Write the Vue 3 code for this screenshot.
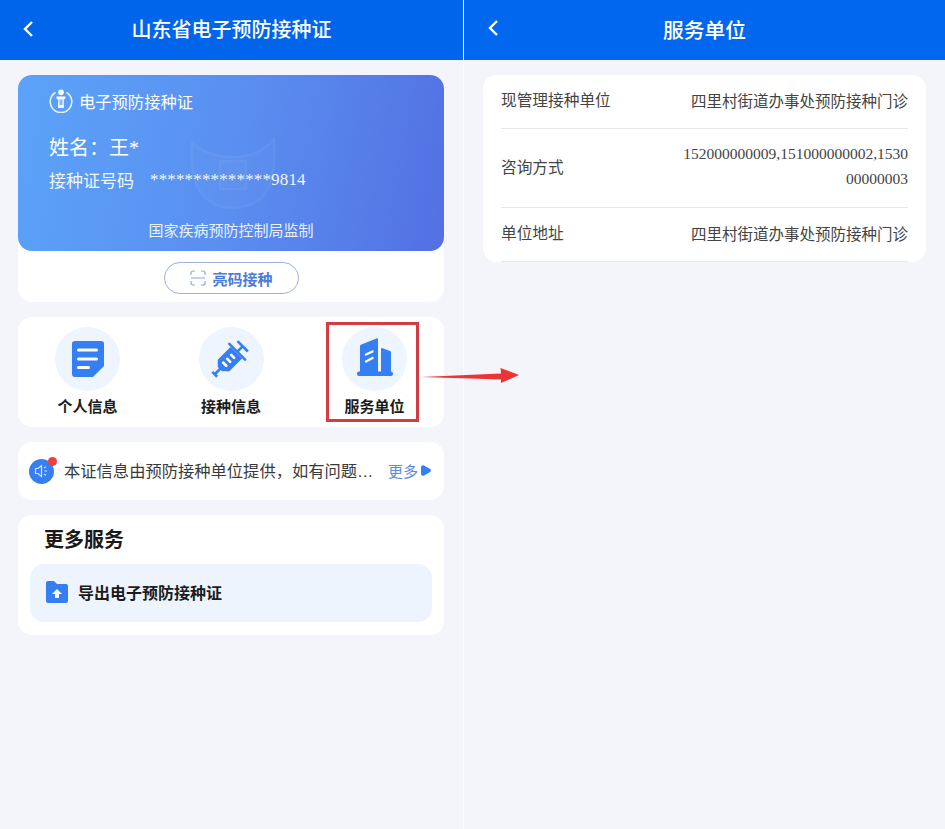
<template>
  <div class="screen">
    <!-- left phone -->
    <section class="panel panel-left">
      <header class="topbar">
        <svg class="back" viewBox="0 0 14 22" width="14" height="22"><path d="M11 4 4 11l7 7" /></svg>
        <h1>山东省电子预防接种证</h1>
      </header>

      <div class="content">
        <div class="white-card cert-wrap">
          <div class="cert">
            <svg class="watermark" viewBox="0 0 90 72" width="90" height="72">
              <path d="M4 6c12 10 26 14 41 14S74 16 86 2c2 30-2 50-14 60-8 6-17 9-27 9s-19-3-26-9C6 52 2 32 4 6Z" />
              <path d="M32 24h26v28H32z" />
            </svg>
            <div class="cert-title">
              <svg viewBox="0 0 24 24" width="24" height="24" class="cert-logo">
                <path class="ring" d="M6.5 3.5a10.8 10.8 0 1 0 11 0" />
                <circle cx="12" cy="3.2" r="2.8" />
                <path d="M7.6 7.4h8.8v2.4l-1.6.6V19H9.2v-8.600l-1.600-.6Z" />
                <rect class="cut" x="10.4" y="10.4" width="3.2" height="5.6" />
              </svg>
              <span>电子预防接种证</span>
            </div>
            <div class="cert-name">姓名：王<span class="serif">*</span></div>
            <div class="cert-no">
              <span>接种证号码</span>
              <span class="serif cert-digits">**************9814</span>
            </div>
            <div class="cert-foot">国家疾病预防控制局监制</div>
          </div>
          <div class="show-code">
            <button class="code-btn">
              <svg viewBox="0 0 16 16" width="16" height="16">
                <path d="M1 5V3a2 2 0 0 1 2-2h2M11 1h2a2 2 0 0 1 2 2v2M15 11v2a2 2 0 0 1-2 2h-2M5 15H3a2 2 0 0 1-2-2v-2M1 8h14" />
              </svg>
              亮码接种
            </button>
          </div>
        </div>

        <div class="white-card nav-card">
          <div v-for="item in navItems" :key="item.label" class="nav-item">
            <div class="nav-circle">
              <svg v-if="item.icon === 'doc'" viewBox="0 0 32 36" width="32" height="36">
                <path class="fill" d="M3 0h26a3 3 0 0 1 3 3v22L21 36H3a3 3 0 0 1-3-3V3a3 3 0 0 1 3-3Z" />
                <path class="white-line" d="M6.500 9h18M6.500 18h18M6.500 26.500h10" />
              </svg>
              <svg v-else-if="item.icon === 'syringe'" class="syringe" viewBox="0 0 40 40" width="40" height="40">
                <g transform="translate(-1.500 0.500) rotate(45 20 20) translate(2.800 3.500) scale(0.86)">
                  <path class="fill" d="M11.5-4h17v3h-17z" />
                  <path class="fill" d="M18.500-2h3v8h-3z" />
                  <path class="fill" d="M7 5h26a1.500 1.500 0 0 1 0 3H7a1.500 1.500 0 0 1 0-3Z" />
                  <path class="fill" d="M10.500 8h19v21l-6 6h-7l-6-6Z" />
                  <path class="fill" d="M18.500 34h3v9h-3z" />
                  <path class="fill" d="M16 42h8v3h-8z" />
                  <path class="white-dash" d="M17.500 14h5M17.500 20.500h5M17.500 27h5" />
                </g>
              </svg>
              <svg v-else class="building" viewBox="0 0 36 38" width="36" height="38">
                <path class="fill" d="M3 8c0-.6.3-1 .9-1.200L20 .2c.6-.2 1 .1 1 .8V35H3Z" />
                <path class="fill" d="M24 10.800c0-.6.4-.9 1-.8l8 3c.6.2 1 .7 1 1.300V35H24Z" />
                <rect class="fill" x="0" y="33.500" width="36" height="4.500" rx="2" />
                <path class="white-line thin" d="M9 16.500 15.500 13.500M9 23.500 15.500 20" />
              </svg>
            </div>
            <div class="nav-label">{{ item.label }}</div>
          </div>
        </div>

        <div class="white-card notice">
          <span class="horn">
            <svg viewBox="0 0 24 24" width="24" height="24">
              <path d="M6.500 9.500H9l3.500-3v11L9 14.500H6.500ZM15 9l2-1.200M15.500 12H18M15 15l2 1.200" />
            </svg>
            <i class="dot"></i>
          </span>
          <span class="notice-text">本证信息由预防接种单位提供，如有问题<span class="dots">…</span></span>
          <span class="more">更多<svg viewBox="0 0 10 11" width="10" height="11"><path d="M0 2.200a2 2 0 0 1 3-1.700l5.800 3.200a2 2 0 0 1 0 3.600L3 10.500a2 2 0 0 1-3-1.700Z" /></svg></span>
        </div>

        <div class="white-card services">
          <h2>更多服务</h2>
          <div class="export-row">
            <svg viewBox="0 0 22 22" width="22" height="22">
              <path class="fill" d="M2 0h6l3 3h9a2 2 0 0 1 2 2v15a2 2 0 0 1-2 2H2a2 2 0 0 1-2-2V2a2 2 0 0 1 2-2Z" />
              <path fill="#fff" d="M11 8 16 13h-3v4H9v-4H6Z" />
            </svg>
            <span>导出电子预防接种证</span>
          </div>
        </div>
      </div>
    </section>

    <!-- right phone -->
    <section class="panel panel-right">
      <header class="topbar">
        <svg class="back" viewBox="0 0 14 22" width="14" height="22"><path d="M11 4 4 11l7 7" /></svg>
        <h1>服务单位</h1>
      </header>
      <div class="detail-card">
        <div class="detail-row">
          <span class="detail-key">现管理接种单位</span>
          <span class="detail-val">四里村街道办事处预防接种门诊</span>
        </div>
        <div class="detail-row phone-row">
          <span class="detail-key">咨询方式</span>
          <span class="detail-val serif phones">152000000009,151000000002,153000000003</span>
        </div>
        <div class="detail-row">
          <span class="detail-key">单位地址</span>
          <span class="detail-val">四里村街道办事处预防接种门诊</span>
        </div>
      </div>
    </section>

    <!-- annotation laid over both screenshots -->
    <div class="mark-box"></div>
    <svg class="mark-arrow" viewBox="0 0 98 17" width="98" height="17">
      <path d="M0 10 80 6.500 79.500 1 98 8 80 16 80 12.500Z" />
    </svg>
  </div>
</template>

<script setup>
const navItems = [
  { label: '个人信息', icon: 'doc' },
  { label: '接种信息', icon: 'syringe' },
  { label: '服务单位', icon: 'building' }
]
</script>

<style>
html, body { margin: 0; background: #f3f5fa; }
</style>

<style scoped>
.screen {
  position: relative;
  display: flex;
  width: 945px;
  height: 829px;
  overflow: hidden;
  background: #f3f5fa;
  font-family: "Noto Sans CJK SC", "Noto Sans", sans-serif;
  color: #222;
}
.panel { height: 100%; }
.panel-left { width: 463px; border-right: 1px solid #fafbfd; }
.panel-right { width: 481px; }
.serif { font-family: "Liberation Serif", "Noto Sans CJK SC", serif; }

.topbar {
  position: relative;
  height: 60px;
  box-sizing: border-box;
  padding-bottom: 3px;
  display: flex;
  align-items: center;
  justify-content: center;
  background: #0165ec;
}
.topbar h1 {
  margin: 0;
  font-size: 20px;
  font-weight: 500;
  color: #fff;
}
.panel-right .topbar { background: #0167ee; }
.panel-right .topbar h1 { font-size: 20.8px; }
.back {
  position: absolute;
  left: 21px;
  top: 18px;
  fill: none;
  stroke: #fff;
  stroke-width: 2.4;
}
.panel-right .back { left: 22px; top: 17px; }

.content {
  display: flex;
  flex-direction: column;
  gap: 15px;
  padding: 15px 19px 0 18px;
}
.white-card {
  background: #fff;
  border-radius: 14px;
}

.cert-wrap { height: 227px; }
.cert {
  position: relative;
  height: 176px;
  box-sizing: border-box;
  padding: 13px 31px 0;
  border-radius: 14px;
  background: linear-gradient(100deg, #5ba3f9 0%, #5a8ff0 50%, #5370e3 100%);
  color: #fff;
  overflow: hidden;
}
.watermark {
  position: absolute;
  left: 170px;
  top: 62px;
  fill: rgba(255, 255, 255, 0.02);
  stroke: rgba(255, 255, 255, 0.05);
  stroke-width: 2.5;
}
.cert-title {
  display: flex;
  align-items: center;
  gap: 6px;
  height: 26px;
  font-size: 16.3px;
  line-height: 26px;
}
.cert-logo { fill: #fff; }
.cert-logo .ring { fill: none; stroke: #e6f1ff; stroke-width: 1.5; }
.cert-logo .cut { fill: #8db9f6; }
.cert-name {
  margin-top: 19px;
  font-size: 20px;
  line-height: 28px;
}
.cert-no {
  display: flex;
  align-items: center;
  gap: 16px;
  margin-top: 6px;
  font-size: 17px;
  line-height: 24px;
  color: #f0f6ff;
}
.cert-digits { font-size: 17px; letter-spacing: 0.15px; }
.cert-foot {
  position: absolute;
  left: 0;
  right: 0;
  bottom: 11px;
  text-align: center;
  font-size: 15px;
  line-height: 20px;
  color: #e9f1ff;
}
.show-code {
  display: flex;
  justify-content: center;
  padding: 11px 0 0 1px;
}
.code-btn {
  display: flex;
  align-items: center;
  justify-content: center;
  gap: 6px;
  width: 135px;
  height: 32px;
  padding: 0;
  border: 1px solid #9fb3d9;
  border-radius: 16px;
  background: #fff;
  font: 700 15px "Noto Sans CJK SC", sans-serif;
  color: #4b7cd9;
}
.code-btn svg {
  fill: none;
  stroke: #8ea8db;
  stroke-width: 1.2;
}

.nav-card {
  display: flex;
  justify-content: space-between;
  height: 110px;
  padding: 0 37px;
  box-sizing: border-box;
}
.nav-item {
  width: 65px;
  display: flex;
  flex-direction: column;
  align-items: center;
  padding-top: 10px;
}
.nav-circle {
  width: 65px;
  height: 64px;
  flex-shrink: 0;
  border-radius: 50%;
  background: #eff5fe;
  display: flex;
  align-items: center;
  justify-content: center;
}
.building { margin-bottom: 4px; }
.syringe { overflow: visible; }
.nav-label {
  margin-top: 4px;
  white-space: nowrap;
  font-size: 15px;
  font-weight: 700;
  line-height: 22px;
  color: #1c1c1c;
}
.fill { fill: #367ff2; }
.white-line {
  fill: none;
  stroke: #fff;
  stroke-width: 3;
  stroke-linecap: round;
}
.white-line.thin { stroke-width: 2.4; }
.white-dash {
  fill: none;
  stroke: #fff;
  stroke-width: 3;
  stroke-linecap: round;
}

.notice {
  display: flex;
  align-items: center;
  height: 58px;
  padding: 0 13px 2px 11px;
  box-sizing: border-box;
}
.horn {
  position: relative;
  width: 25px;
  height: 25px;
  margin: 2px 10px 0 0;
  flex-shrink: 0;
  border-radius: 50%;
  background: #367ff2;
}
.horn svg {
  display: block;
  fill: none;
  stroke: #d6e5ff;
  stroke-width: 1.2;
}
.dot {
  position: absolute;
  right: -3px;
  top: -1.5px;
  width: 9px;
  height: 9px;
  border-radius: 50%;
  background: #ee3f45;
}
.notice-text {
  flex: 1;
  white-space: nowrap;
  font-size: 16.3px;
  color: #3a3a3a;
}
.dots { font-family: "Liberation Sans", sans-serif; }
.more {
  display: flex;
  align-items: center;
  gap: 3px;
  font-size: 15px;
  color: #5c8bdf;
}
.more svg { fill: #367ff2; }

.services {
  height: 120px;
  padding: 10px 12px 0;
  box-sizing: border-box;
}
.services h2 {
  margin: 0 0 11px 14px;
  font-size: 20px;
  font-weight: 700;
  line-height: 28px;
  color: #1a1a1a;
}
.export-row {
  display: flex;
  align-items: center;
  gap: 10px;
  height: 58px;
  box-sizing: border-box;
  padding: 0 0 2px 16px;
  border-radius: 14px;
  background: #eef4fe;
  font-size: 16px;
  font-weight: 700;
  color: #1c1c1c;
}

.detail-card {
  margin: 15px 19px 0;
  padding: 0 18px;
  border-radius: 14px;
  background: #fff;
}
.detail-row {
  display: flex;
  align-items: center;
  justify-content: space-between;
  height: 49px;
  padding-bottom: 4px;
  border-bottom: 1px solid #e6e8ec;
  font-size: 15.5px;
  color: #444;
}
.phone-row { height: 74px; }
.detail-key { white-space: nowrap; font-size: 15.7px; }
.detail-val { text-align: right; }
.phones {
  width: 226px;
  word-break: break-all;
  line-height: 25px;
}

.mark-box {
  position: absolute;
  left: 326px;
  top: 322px;
  width: 93px;
  height: 100px;
  box-sizing: border-box;
  border: 3px solid #d33c42;
}
.mark-arrow {
  position: absolute;
  left: 421px;
  top: 367px;
  fill: #ec3337;
}
</style>
